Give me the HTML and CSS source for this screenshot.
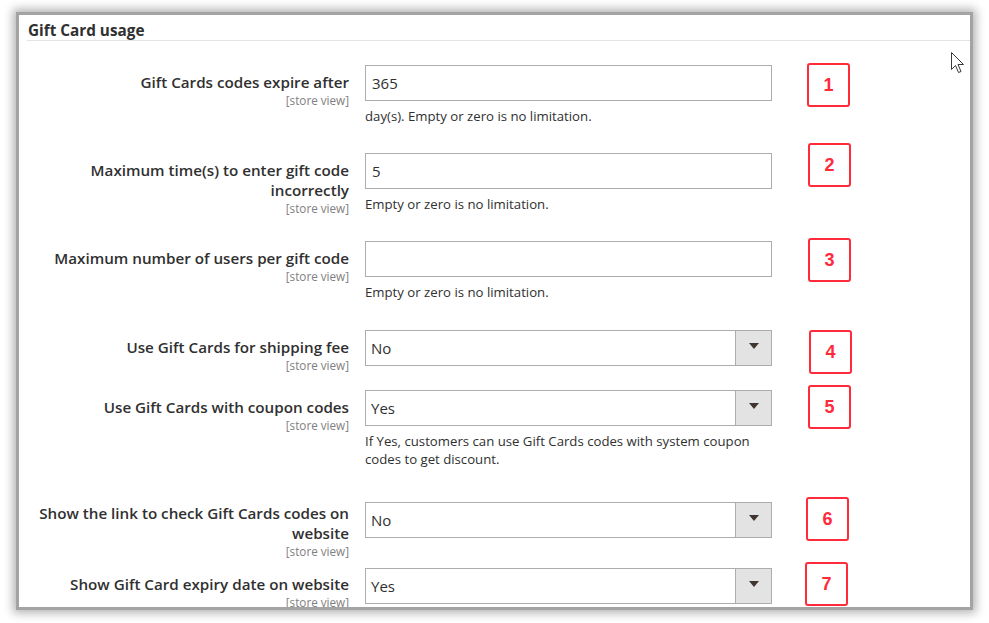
FILE: index.html
```html
<!DOCTYPE html>
<html lang="en">
<head>
<meta charset="utf-8">
<title>Gift Card usage</title>
<link rel="stylesheet" href="styles.css">
</head>
<body>
<div class="panel">
  <div class="section-head"><span class="section-title">Gift Card usage</span></div>

  <div class="row row-1">
    <div class="label"><span class="label-text">Gift Cards codes expire after</span><span class="scope">[store view]</span></div>
    <div class="control">
      <div class="input">365</div>
      <div class="note">day(s). Empty or zero is no limitation.</div>
    </div>
  </div>

  <div class="row row-2">
    <div class="label"><span class="label-text">Maximum time(s) to enter gift code incorrectly</span><span class="scope">[store view]</span></div>
    <div class="control">
      <div class="input">5</div>
      <div class="note">Empty or zero is no limitation.</div>
    </div>
  </div>

  <div class="row row-3">
    <div class="label"><span class="label-text">Maximum number of users per gift code</span><span class="scope">[store view]</span></div>
    <div class="control">
      <div class="input"></div>
      <div class="note">Empty or zero is no limitation.</div>
    </div>
  </div>

  <div class="row row-4">
    <div class="label"><span class="label-text">Use Gift Cards for shipping fee</span><span class="scope">[store view]</span></div>
    <div class="control">
      <div class="select"><span class="select-value">No</span><span class="select-arrow"><span class="tri"></span></span></div>
    </div>
  </div>

  <div class="row row-5">
    <div class="label"><span class="label-text">Use Gift Cards with coupon codes</span><span class="scope">[store view]</span></div>
    <div class="control">
      <div class="select"><span class="select-value">Yes</span><span class="select-arrow"><span class="tri"></span></span></div>
      <div class="note">If Yes, customers can use Gift Cards codes with system coupon codes to get discount.</div>
    </div>
  </div>

  <div class="row row-6">
    <div class="label label-tight"><span class="label-text">Show the link to check Gift Cards codes on website</span><span class="scope">[store view]</span></div>
    <div class="control">
      <div class="select"><span class="select-value">No</span><span class="select-arrow"><span class="tri"></span></span></div>
    </div>
  </div>

  <div class="row row-7">
    <div class="label label-last"><span class="label-text">Show Gift Card expiry date on website</span><span class="scope">[store view]</span></div>
    <div class="control">
      <div class="select"><span class="select-value">Yes</span><span class="select-arrow"><span class="tri"></span></span></div>
    </div>
  </div>

  <div class="badge b1">1</div>
  <div class="badge b2">2</div>
  <div class="badge b3">3</div>
  <div class="badge b4">4</div>
  <div class="badge b5">5</div>
  <div class="badge b6">6</div>
  <div class="badge b7">7</div>

  <svg class="cursor" width="17" height="24" viewBox="0 0 17 24" xmlns="http://www.w3.org/2000/svg">
    <path d="M1.5 1.5 L1.5 18.5 L5.5 14.5 L8.5 21.5 L11 20.5 L8 13.5 L13.5 13.5 Z" fill="#ffffff" stroke="#3a3a3a" stroke-width="1" stroke-linejoin="round"/>
  </svg>
</div>
</body>
</html>
```

FILE: styles.css
```css
html, body {
  margin: 0;
  padding: 0;
  background: #ffffff;
}

body {
  font-family: "Open Sans", "Noto Sans", sans-serif;
  color: #303030;
  width: 989px;
  height: 623px;
  overflow: hidden;
}

.panel {
  position: relative;
  margin: 15px 0 0 19px;
  width: 951px;
  height: 592px;
  background: #ffffff;
  overflow: hidden;
  box-shadow: 0 0 0 3px #a3a3a3, 0 0 9px 6px rgba(0, 0, 0, 0.3);
}

.section-head {
  margin-left: 8px;
  height: 25px;
  border-bottom: 1px solid #e3e3e3;
  padding-left: 1px;
}

.section-title {
  display: block;
  padding-top: 5px;
  font-size: 15.3px;
  line-height: 20px;
  font-weight: 700;
  color: #303030;
}

.row {
  display: grid;
  grid-template-columns: 330px 407px;
  column-gap: 16px;
  align-items: start;
}

.row-1 { margin-top: 24px; }
.row-2 { margin-top: 28px; }
.row-3 { margin-top: 25px; }
.row-4 { margin-top: 29px; }
.row-5 { margin-top: 17px; }
.row-6 { margin-top: 34px; }
.row-7 { margin-top: 9px; }

.label {
  display: flex;
  flex-direction: column;
  align-items: flex-end;
  text-align: right;
  padding-top: 7px;
}

.label-tight {
  padding-top: 1px;
}

.label-last {
  padding-top: 6px;
}

.label-text {
  font-size: 15.2px;
  line-height: 20px;
  font-weight: 600;
  color: #303030;
}

.scope {
  font-size: 11.7px;
  line-height: 16px;
  color: #808080;
}

.control {
  display: flex;
  flex-direction: column;
}

.input {
  box-sizing: border-box;
  height: 36px;
  border: 1px solid #adadad;
  padding: 0 6px;
  font-size: 15px;
  line-height: 34px;
  color: #303030;
  background: #ffffff;
}

.select {
  box-sizing: border-box;
  height: 36px;
  border: 1px solid #adadad;
  display: flex;
  background: #ffffff;
}

.select-value {
  flex: 1;
  padding: 0 5px;
  font-size: 15px;
  line-height: 34px;
  color: #303030;
}

.select-arrow {
  width: 36px;
  background: #e3e3e3;
  border-left: 1px solid #adadad;
  display: flex;
  justify-content: center;
  padding-top: 12px;
  box-sizing: border-box;
}

.tri {
  width: 0;
  height: 0;
  border-left: 5px solid transparent;
  border-right: 5px solid transparent;
  border-top: 6px solid #41362f;
}

.note {
  margin-top: 6px;
  font-size: 13.2px;
  line-height: 18px;
  color: #303030;
}

.badge {
  position: absolute;
  box-sizing: border-box;
  width: 43px;
  height: 44px;
  border: 2px solid #ff2a3a;
  border-radius: 3px;
  background: #ffffff;
  color: #ff2a3a;
  font-family: "Liberation Sans", Arial, sans-serif;
  font-weight: 700;
  font-size: 18px;
  display: flex;
  align-items: center;
  justify-content: center;
}

.b1 { left: 788px; top: 48px; }
.b2 { left: 789px; top: 128px; }
.b3 { left: 789px; top: 223px; }
.b4 { left: 790px; top: 315px; }
.b5 { left: 789px; top: 370px; }
.b6 { left: 787px; top: 482px; }
.b7 { left: 786px; top: 547px; }

.cursor {
  position: absolute;
  left: 931px;
  top: 36px;
}
```
